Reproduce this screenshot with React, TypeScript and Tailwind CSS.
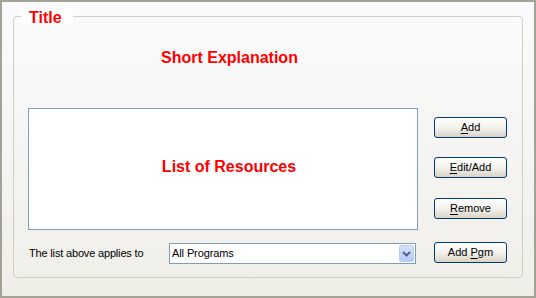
import React from "react";

const F = { fontFamily: '"Liberation Sans", Arial, sans-serif' };

function Btn({ pre, u, post }: { pre?: string; u: string; post?: string }) {
  return (
    <div className="w-[73px] h-[21px] rounded-[3px] border border-[#003c74] bg-gradient-to-b from-[#ffffff] via-[#f3f2ec] to-[#d8d3c7] flex items-center justify-center text-[11px] text-black leading-none">
      <span>
        {pre}
        <span className="underline underline-offset-[2px]">{u}</span>
        {post}
      </span>
    </div>
  );
}

export default function App() {
  return (
    <div
      style={F}
      className="w-[536px] h-[298px] border-2 border-[#a3a295] bg-gradient-to-b from-[#fbfbfd] to-[#efeee8] pt-[14px] pl-[11px]"
    >
      <div className="relative w-[510px] h-[262px] border border-[#d0d0bf] rounded-[4px]">
        <div className="absolute left-[7px] top-[-8px] w-[52px] h-[14px] bg-[#fefefe] pl-[8px]">
          <span className="relative top-[2px] block text-[16px] leading-[14px] font-bold text-[#ff0000]">
            Title
          </span>
        </div>
        <div className="pl-[14px] flex flex-col">
          <div className="h-[91px] pt-[32px] pl-[133px] text-[16px] leading-[18px] font-bold text-[#ff0000]">
            Short Explanation
          </div>
          <div className="flex">
            <div className="w-[390px] h-[122px] border border-[#7f9db9] bg-white flex items-center justify-center pl-[12px] pb-[5px] text-[16px] leading-[18px] font-bold text-[#ff0000]">
              List of Resources
            </div>
            <div className="ml-[16px] pt-[9px] flex flex-col">
              <Btn u="A" post="dd" />
              <div className="mt-[19px]">
                <Btn u="E" post="dit/Add" />
              </div>
              <div className="mt-[20px]">
                <Btn u="R" post="emove" />
              </div>
            </div>
          </div>
          <div className="flex mt-[12px]">
            <div className="w-[141px] pl-[1px] pt-[5px] text-[11px] tracking-[-0.17px] leading-[13px] text-black">
              The list above applies to
            </div>
            <div className="mt-[1px] w-[247px] h-[21px] border border-[#7f9db9] bg-white flex items-center justify-between pl-[2px] pr-[1px]">
              <span className="text-[11px] tracking-[-0.1px] leading-[13px] text-black">All Programs</span>
              <div className="w-[15px] h-[17px] rounded-[2px] border border-[#b9cdf6] bg-gradient-to-b from-[#d4e1fd] to-[#b5c8f8] flex items-center justify-center">
                <svg width="9" height="6" viewBox="0 0 9 6">
                  <path d="M1 1 L4.5 4.5 L8 1" fill="none" stroke="#4d6185" strokeWidth="2" />
                </svg>
              </div>
            </div>
            <div className="ml-[18px]">
              <Btn pre="Add " u="P" post="gm" />
            </div>
          </div>
        </div>
      </div>
    </div>
  );
}
